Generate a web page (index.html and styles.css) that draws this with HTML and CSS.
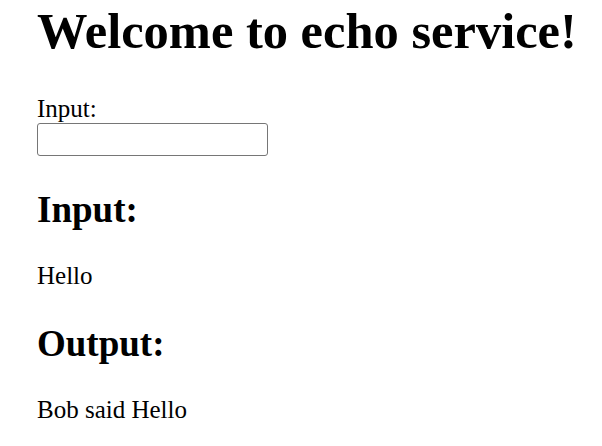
FILE: index.html
```html
<!DOCTYPE html>
<html>
<head>
<meta charset="utf-8">
<link rel="stylesheet" href="styles.css">
</head>
<body>
<main class="page">
  <h1 class="title">Welcome to echo service!</h1>
  <form class="echo-form">
    <label class="field-label" for="msg">Input:</label>
    <input class="field-input" id="msg" type="text">
  </form>
  <h2 class="section-title">Input:</h2>
  <p class="section-text">Hello</p>
  <h2 class="section-title">Output:</h2>
  <p class="section-text">Bob said Hello</p>
</main>
</body>
</html>
```
FILE: styles.css
```css
html, body {
  margin: 0;
  padding: 0;
  background: #ffffff;
}
.page {
  padding-left: 37px;
  font-family: "Liberation Serif", "Times New Roman", serif;
  color: #000000;
}
.title {
  margin: 2px 0 34px 0;
  font-size: 50.5px;
  line-height: 58px;
  font-weight: bold;
}
.echo-form {
  margin: 0 0 4px 0;
  display: flex;
  flex-direction: column;
  align-items: flex-start;
}
.field-label {
  font-size: 25px;
  line-height: 29px;
}
.field-input {
  box-sizing: border-box;
  width: 231px;
  height: 33px;
  margin: 0;
  border: 1px solid #767676;
  border-radius: 3px;
  background: #ffffff;
  padding: 1px 3px;
  font-size: 20px;
}
.section-title {
  margin: 32px 0 30px 0;
  font-size: 37px;
  line-height: 43px;
  font-weight: bold;
}
.section-text {
  margin: 0;
  font-size: 25px;
  line-height: 29px;
}
```
